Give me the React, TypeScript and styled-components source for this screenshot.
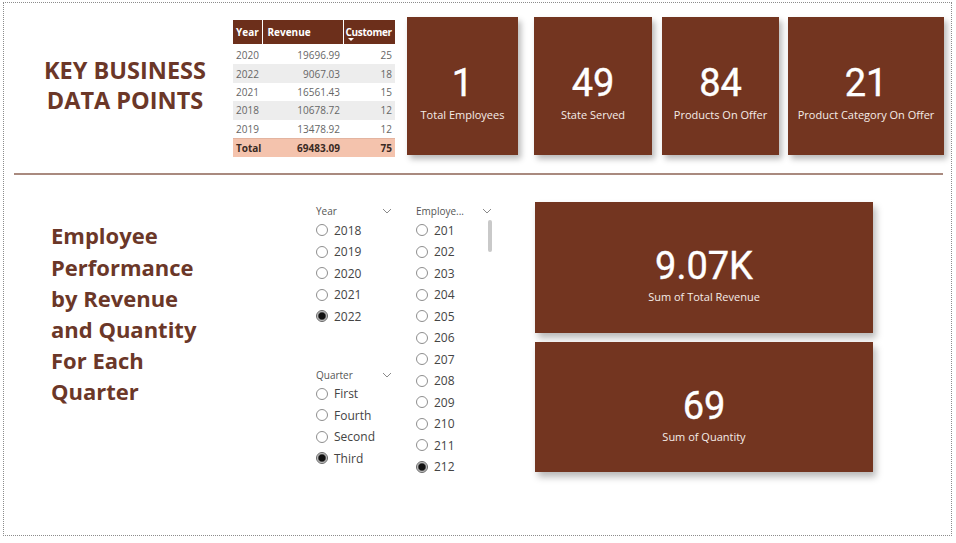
import { createGlobalStyle, styled } from "styled-components";

const GlobalStyle = createGlobalStyle`
  html, body {
    margin: 0;
    padding: 0;
    background: #fff;
  }
  body {
    font-family: "Open Sans", "Noto Sans", sans-serif;
  }
`;

const BROWN = "#733520";
const TITLE = "#6b3728";

const tableRows = [
  { year: "2020", revenue: "19696.99", customer: "25" },
  { year: "2022", revenue: "9067.03", customer: "18" },
  { year: "2021", revenue: "16561.43", customer: "15" },
  { year: "2018", revenue: "10678.72", customer: "12" },
  { year: "2019", revenue: "13478.92", customer: "12" },
];

const kpis = [
  { value: "1", label: "Total Employees", width: 111, offset: 0 },
  { value: "49", label: "State Served", width: 118, offset: 16 },
  { value: "84", label: "Products On Offer", width: 117, offset: 10 },
  { value: "21", label: "Product Category On Offer", width: 156, offset: 9 },
];

const years = ["2018", "2019", "2020", "2021", "2022"];
const quarters = ["First", "Fourth", "Second", "Third"];
const employees = ["201", "202", "203", "204", "205", "206", "207", "208", "209", "210", "211", "212"];

function Chevron() {
  return (
    <svg width="10" height="6" viewBox="0 0 10 6">
      <polyline points="1,1 5,5 9,1" fill="none" stroke="#8a8a8a" strokeWidth="1" />
    </svg>
  );
}

function Slicer({
  title,
  items,
  selected,
  scroll,
}: {
  title: string;
  items: string[];
  selected: string;
  scroll?: boolean;
}) {
  return (
    <SlicerBox>
      <SlicerHead>
        <span>{title}</span>
        <Chevron />
      </SlicerHead>
      {scroll && <ScrollThumb />}
      {items.map((item) => (
        <Option key={item}>
          <Radio $on={item === selected} />
          {item}
        </Option>
      ))}
    </SlicerBox>
  );
}

export default function App() {
  return (
    <>
      <GlobalStyle />
      <Frame>
        <TopRow>
          <TopTitle>
            KEY BUSINESS
            <br />
            DATA POINTS
          </TopTitle>

          <DataTable>
            <colgroup>
              <col style={{ width: 29 }} />
              <col style={{ width: 81 }} />
              <col style={{ width: 52 }} />
            </colgroup>
            <thead>
              <tr>
                <th>Year</th>
                <th>Revenue</th>
                <th>
                  Customer
                  <SortMark />
                </th>
              </tr>
            </thead>
            <tbody>
              {tableRows.map((r, i) => (
                <DataRow key={r.year} $shade={i % 2 === 1}>
                  <td>{r.year}</td>
                  <td>{r.revenue}</td>
                  <td>{r.customer}</td>
                </DataRow>
              ))}
              <TotalRow>
                <td>Total</td>
                <td>69483.09</td>
                <td>75</td>
              </TotalRow>
            </tbody>
          </DataTable>

          <KpiRow>
            {kpis.map((k) => (
              <KpiCard key={k.label} $width={k.width} $offset={k.offset}>
                <KpiValue>{k.value}</KpiValue>
                <KpiLabel>{k.label}</KpiLabel>
              </KpiCard>
            ))}
          </KpiRow>
        </TopRow>

        <Divider />

        <BottomRow>
          <SideTitle>
            Employee
            <br />
            Performance
            <br />
            by Revenue
            <br />
            and Quantity
            <br />
            For Each
            <br />
            Quarter
          </SideTitle>

          <SlicerColumn $width={100}>
            <Slicer title="Year" items={years} selected="2022" />
            <Spacer />
            <Slicer title="Quarter" items={quarters} selected="Third" />
          </SlicerColumn>

          <SlicerColumn $width={119}>
            <Slicer title="Employe..." items={employees} selected="212" scroll />
          </SlicerColumn>

          <BigCards>
            <BigCard $height={131}>
              <BigValue>9.07K</BigValue>
              <BigLabel>Sum of Total Revenue</BigLabel>
            </BigCard>
            <BigCard $height={130}>
              <BigValue>69</BigValue>
              <BigLabel>Sum of Quantity</BigLabel>
            </BigCard>
          </BigCards>
        </BottomRow>
      </Frame>
    </>
  );
}

const Frame = styled.div`
  margin: 2px 0 0 3px;
  width: 949px;
  height: 534px;
  box-sizing: border-box;
  border: 1px dotted #8c8c8c;
  overflow: hidden;
`;

const TopRow = styled.div`
  display: flex;
  align-items: flex-start;
  padding-top: 14px;
`;

const TopTitle = styled.div`
  box-sizing: border-box;
  width: 229px;
  flex: none;
  padding-left: 13px;
  margin-top: 38px;
  font-size: 23.5px;
  line-height: 30px;
  font-weight: 700;
  color: ${TITLE};
  text-align: center;
`;

const DataTable = styled.table`
  margin-top: 3px;
  width: 162px;
  flex: none;
  table-layout: fixed;
  border-collapse: collapse;
  font-size: 10px;
  color: #666;

  th {
    height: 24px;
    padding: 0 3px;
    background: #6c2f1b;
    color: #fff;
    font-weight: 700;
    text-align: left;
    vertical-align: middle;
    position: relative;
    line-height: 1;
    white-space: nowrap;
    overflow: visible;
  }

  th + th {
    border-left: 1px solid rgba(255, 255, 255, 0.18);
  }

  th:nth-child(2) {
    padding-left: 5px;
  }

  th:nth-child(3) {
    padding: 0 0 0 2px;
    letter-spacing: -0.3px;
  }

  tbody::before {
    content: "";
    display: table-row;
    height: 2px;
  }

  td {
    height: 18.4px;
    padding: 0 3px;
    text-align: right;
  }

  td:first-child {
    text-align: left;
  }
`;

const SortMark = styled.span`
  position: absolute;
  left: 4px;
  bottom: 3px;
  border-left: 3px solid transparent;
  border-right: 3px solid transparent;
  border-top: 3px solid #fff;
`;

const DataRow = styled.tr<{ $shade: boolean }>`
  background: ${(p) => (p.$shade ? "#ededed" : "#fff")};
`;

const TotalRow = styled.tr`
  background: #f4c3ad;
  color: #3a2a24;
  font-weight: 700;
  border-top: 1px solid #e3b4a0;
`;

const KpiRow = styled.div`
  display: flex;
  margin-left: 12px;
`;

const KpiCard = styled.div<{ $width: number; $offset: number }>`
  width: ${(p) => p.$width}px;
  margin-left: ${(p) => p.$offset}px;
  height: 138px;
  box-sizing: border-box;
  padding-top: 13px;
  background: ${BROWN};
  box-shadow: 3px 4px 6px rgba(0, 0, 0, 0.28);
  display: flex;
  flex-direction: column;
  align-items: center;
  justify-content: center;
  color: #fff;
`;

const KpiValue = styled.div`
  font-family: Roboto, "Noto Sans", sans-serif;
  font-weight: 400;
  font-size: 38px;
  line-height: 40px;
  -webkit-text-stroke: 0.4px #fff;
`;

const KpiLabel = styled.div`
  margin-top: 5px;
  font-size: 11px;
  line-height: 14px;
  color: #f5ece8;
  white-space: nowrap;
`;

const Divider = styled.div`
  margin: 16px 8px 0 10px;
  height: 2px;
  background: #a98a7f;
`;

const BottomRow = styled.div`
  display: flex;
  align-items: flex-start;
  padding-top: 27px;
`;

const SideTitle = styled.div`
  box-sizing: border-box;
  width: 312px;
  flex: none;
  padding-left: 47px;
  margin-top: 18px;
  font-size: 22px;
  line-height: 31.2px;
  font-weight: 700;
  color: ${TITLE};
`;

const SlicerColumn = styled.div<{ $width: number }>`
  width: ${(p) => p.$width}px;
  flex: none;
  display: flex;
  flex-direction: column;
  padding-top: 2px;
`;

const Spacer = styled.div`
  height: 41px;
`;

const SlicerBox = styled.div`
  position: relative;
  width: 76px;
`;

const SlicerHead = styled.div`
  height: 14px;
  display: flex;
  align-items: center;
  justify-content: space-between;
  font-size: 10px;
  color: #555;
  margin-bottom: 1px;
`;

const ScrollThumb = styled.div`
  position: absolute;
  right: 0;
  top: 16px;
  width: 4px;
  height: 32px;
  border-radius: 2px;
  background: #c9c9c9;
`;

const Option = styled.div`
  height: 21.5px;
  display: flex;
  align-items: center;
  gap: 6px;
  font-size: 12px;
  color: #444;
  white-space: nowrap;
`;

const Radio = styled.span<{ $on: boolean }>`
  width: 12px;
  height: 12px;
  box-sizing: border-box;
  border-radius: 50%;
  border: 1px solid ${(p) => (p.$on ? "#666" : "#8e8e8e")};
  background: ${(p) =>
    p.$on
      ? "radial-gradient(circle, #111 0 3px, #555 3.6px, #c8c8c8 4.6px, #e6e6e6 6px)"
      : "#fff"};
  flex: none;
`;

const BigCards = styled.div`
  display: flex;
  flex-direction: column;
  gap: 9px;
`;

const BigCard = styled.div<{ $height: number }>`
  width: 338px;
  height: ${(p) => p.$height}px;
  box-sizing: border-box;
  padding-top: 14px;
  background: ${BROWN};
  box-shadow: 3px 5px 7px rgba(0, 0, 0, 0.28);
  display: flex;
  flex-direction: column;
  align-items: center;
  justify-content: center;
  color: #fff;
`;

const BigValue = styled.div`
  font-family: Roboto, "Noto Sans", sans-serif;
  font-weight: 400;
  font-size: 38px;
  line-height: 42px;
  -webkit-text-stroke: 0.4px #fff;
`;

const BigLabel = styled.div`
  margin-top: 3px;
  font-size: 11px;
  line-height: 14px;
  color: #f5ece8;
`;
